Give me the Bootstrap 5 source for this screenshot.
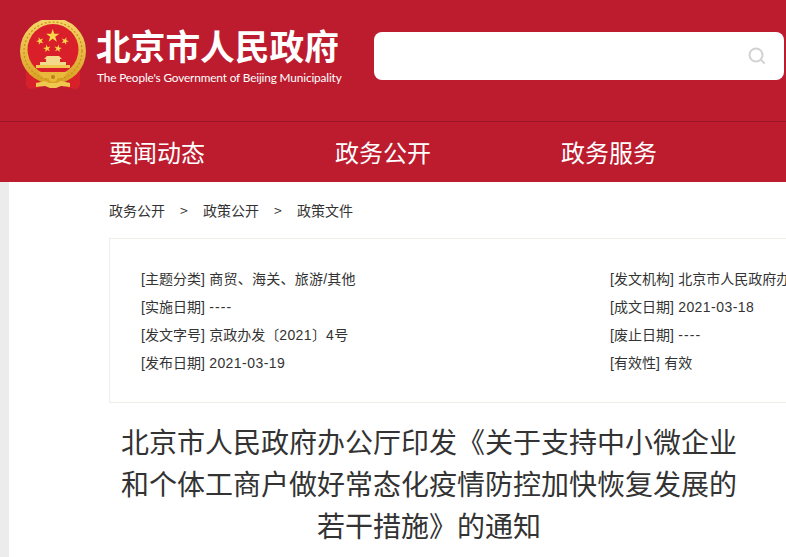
<!DOCTYPE html>
<html lang="zh-CN">
<head>
    <meta charset="UTF-8">
    <meta name="viewport" content="width=device-width, initial-scale=1">
    <title>北京市人民政府</title>
    <link rel="stylesheet" href="https://cdn.jsdelivr.net/npm/bootstrap@5.3.0/dist/css/bootstrap.min.css">
    <style>
        html, body { height: 100%; overflow: hidden; }
        body { font-family: "Liberation Sans", "Noto Sans CJK SC", sans-serif; color: #333; font-size: 14px; }
        .site-head { background: #bc1c2e; height: 122px; border-bottom: 1px solid #9c1526; padding: 20px 2px 0 19px; }
        .brand-logo { width: 68px; height: 70px; flex: none; }
        .brand-text { width: 245px; flex: none; margin-left: 10px; color: #fff; }
        .brand-cn { font-family: "Noto Sans CJK SC", sans-serif; font-weight: 700; font-size: 34.7px; line-height: 50px; margin-left: -1px; white-space: nowrap; }
        .brand-en { font-family: "Lato", sans-serif; font-size: 11.8px; line-height: 16px; letter-spacing: -.14px; white-space: nowrap; }
        .search-box { width: 410px; height: 48px; margin: 12px 0 0 32px; border-radius: 8px; padding-right: 18px; }
        .site-menu { background: #bc1c2e; height: 60px; padding-left: 109px; gap: 130px; }
        .site-menu .nav-link { padding: 0; color: #fff; font-family: "Noto Sans CJK SC", sans-serif; font-size: 24px; line-height: 60px; }
        .page-body { border-left: 9px solid #ececec; padding-left: 100px; height: 375px; width: 1200px; }
        .crumbs { --bs-breadcrumb-divider: '>'; --bs-breadcrumb-margin-bottom: 0; --bs-breadcrumb-item-padding-x: 15.1px; --bs-breadcrumb-divider-color: #333; --bs-breadcrumb-item-active-color: #333; padding-top: 18px; line-height: 20px; font-size: 14px; font-family: "Noto Sans CJK SC", sans-serif; }
        .crumbs a { color: #333; text-decoration: none; }
        .meta-box { width: 1000px; height: 165px; border: 1px solid #eeeee6; margin-top: 18px; padding: 26px 0 0 31px; }
        .meta-col { width: 469px; flex: none; }
        .meta-row { line-height: 28px; white-space: nowrap; font-size: 14px; word-spacing: .5px; }
        .num-val { letter-spacing: .44px; }
        .dash-val { letter-spacing: 1.1px; }
        .topic-val { letter-spacing: .25px; }
        .doc-title { width: 640px; margin: 17px 0 0; padding: 0 12px; font-family: "Noto Sans CJK SC", sans-serif; font-size: 28px; line-height: 42px; font-weight: 400; color: #333; text-align: center; }
    </style>
</head>
<body>
    <header class="site-head d-flex align-items-start">
        <!-- 国徽 -->
        <svg class="brand-logo" viewBox="19 20 68 70" aria-hidden="true">
            <defs>
                <linearGradient id="gold" x1="0" y1="0" x2="0" y2="1">
                    <stop offset="0" stop-color="#f6d66a"/>
                    <stop offset="1" stop-color="#d9a021"/>
                </linearGradient>
                <polygon id="star" fill="#f8d84a" points="0,-1 .225,-.309 .951,-.309 .363,.118 .588,.809 0,.382 -.588,.809 -.363,.118 -.951,-.309 -.225,-.309"/>
            </defs>
            <path d="M26 68h11l2 20-10 1-3-4zM80 68H69l-2 20 10 1 3-4z" fill="#d8202a"/>
            <circle cx="53" cy="51" r="33" fill="url(#gold)"/>
            <circle cx="53" cy="51" r="29" fill="none" stroke="#c98f1a" stroke-width="1.2" stroke-dasharray="2 2"/>
            <circle cx="53" cy="49.500" r="25.500" fill="#d9202a"/>
            <use href="#star" transform="translate(52.7 36) scale(7)"/>
            <use href="#star" transform="translate(40 41) rotate(-20) scale(4)"/>
            <use href="#star" transform="translate(65 41) rotate(20) scale(4)"/>
            <use href="#star" transform="translate(47 48.5) rotate(-10) scale(4)"/>
            <use href="#star" transform="translate(58 48.5) rotate(10) scale(4)"/>
            <path d="M47 56h12l3 3h-2v3h6v3H40v-3h6v-3h-2z" fill="#f4d98a"/>
            <path d="M36 65h34v3H36z" fill="#f0c850"/>
            <path d="M38 72h30l-5 6H43z" fill="#e8b93a"/>
            <path d="M36 83l9-2 4 2h8l4-2 9 2v4l-9-1-5 2h-6l-5-2-9 1z" fill="#f0c850"/>
            <circle cx="53" cy="77" r="5" fill="#e8b93a"/>
            <circle cx="53" cy="77" r="2" fill="#bd7f16"/>
        </svg>
        <div class="brand-text">
            <div class="brand-cn">北京市人民政府</div>
            <div class="brand-en">The People's Government of Beijing Municipality</div>
        </div>
        <div class="search-box bg-white d-flex align-items-center justify-content-end">
            <svg width="18" height="18" viewBox="0 0 18 18" fill="none" stroke="#d2d2d2" stroke-width="2" aria-hidden="true">
                <circle cx="8" cy="8" r="6.500"/>
                <path d="M12.800 12.800l4 3.800"/>
            </svg>
        </div>
    </header>

    <nav class="site-menu nav">
        <a class="nav-link" href="#">要闻动态</a>
        <a class="nav-link" href="#">政务公开</a>
        <a class="nav-link" href="#">政务服务</a>
    </nav>

    <main class="page-body">
        <ol class="breadcrumb crumbs">
            <li class="breadcrumb-item"><a href="#">政务公开</a></li>
            <li class="breadcrumb-item"><a href="#">政策公开</a></li>
            <li class="breadcrumb-item active">政策文件</li>
        </ol>

        <div class="meta-box d-flex">
            <div class="meta-col">
                <div class="meta-row">[主题分类] <span class="topic-val">商贸、海关、旅游/其他</span></div>
                <div class="meta-row">[实施日期] <span class="dash-val">----</span></div>
                <div class="meta-row">[发文字号] 京政办发〔<span class="num-val">2021</span>〕<span class="num-val">4</span>号</div>
                <div class="meta-row">[发布日期] <span class="num-val">2021-03-19</span></div>
            </div>
            <div class="meta-col">
                <div class="meta-row">[发文机构] 北京市人民政府办公厅</div>
                <div class="meta-row">[成文日期] <span class="num-val">2021-03-18</span></div>
                <div class="meta-row">[废止日期] <span class="dash-val">----</span></div>
                <div class="meta-row">[有效性] 有效</div>
            </div>
        </div>

        <h1 class="doc-title">北京市人民政府办公厅印发《关于支持中小微企业和个体工商户做好常态化疫情防控加快恢复发展的若干措施》的通知</h1>
    </main>

    <script src="https://cdn.jsdelivr.net/npm/bootstrap@5.3.0/dist/js/bootstrap.bundle.min.js"></script>
</body>
</html>
